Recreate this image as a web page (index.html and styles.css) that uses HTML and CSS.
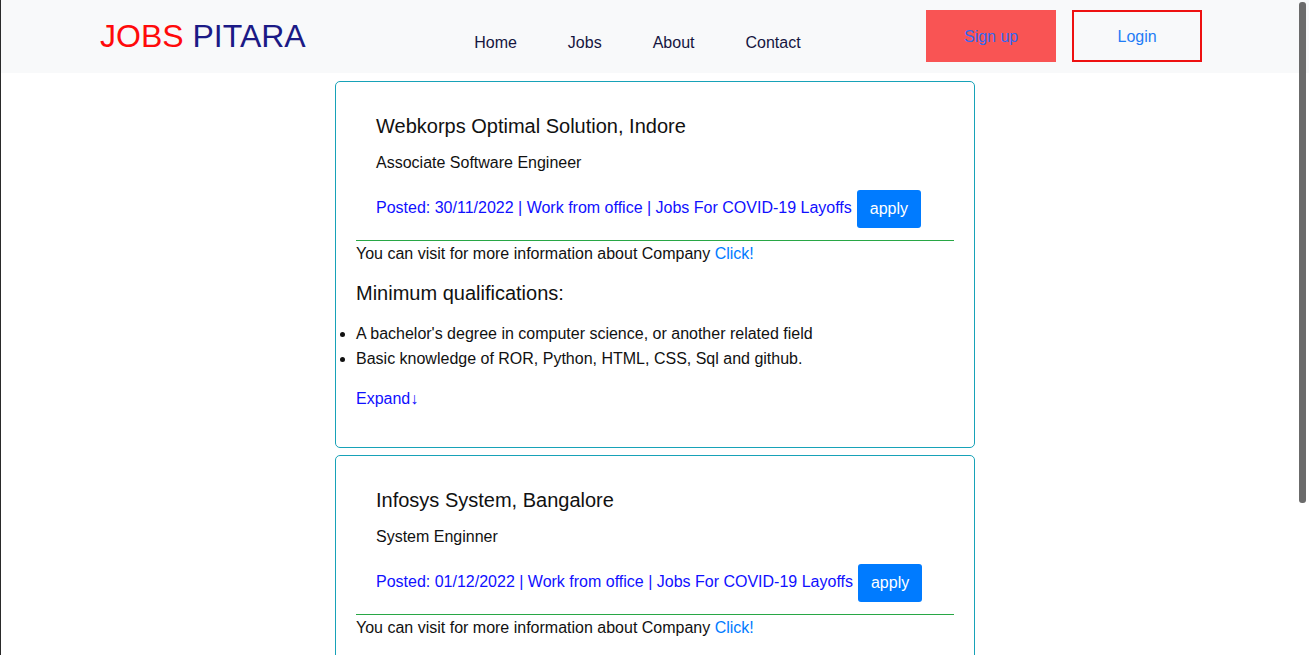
FILE: index.html
```html
<!DOCTYPE html>
<html lang="en">
<head>
<meta charset="utf-8">
<title>Jobs Pitara</title>
<link rel="stylesheet" href="styles.css">
</head>
<body>
<header class="topbar">
  <div class="logo"><span class="logo-red">JOBS</span> <span class="logo-blue">PITARA</span></div>
  <nav class="nav">
    <a class="nav-link" href="#">Home</a>
    <a class="nav-link" href="#">Jobs</a>
    <a class="nav-link" href="#">About</a>
    <a class="nav-link" href="#">Contact</a>
  </nav>
  <div class="auth">
    <a class="btn-signup" href="#">Sign up</a>
    <a class="btn-login" href="#">Login</a>
  </div>
</header>

<main class="jobs">
  <section class="card">
    <div class="card-head">
      <h5 class="company">Webkorps Optimal Solution, Indore</h5>
      <p class="role">Associate Software Engineer</p>
      <p class="meta">Posted: 30/11/2022 | Work from office | Jobs For COVID-19 Layoffs <a class="btn-apply" href="#">apply</a></p>
    </div>
    <hr class="divider">
    <p class="visit">You can visit for more information about Company <a class="click" href="#">Click!</a></p>
    <h5 class="qual">Minimum qualifications:</h5>
    <ul class="qual-list">
      <li>A bachelor's degree in computer science, or another related field</li>
      <li>Basic knowledge of ROR, Python, HTML, CSS, Sql and github.</li>
    </ul>
    <a class="expand" href="#">Expand↓</a>
  </section>

  <section class="card">
    <div class="card-head">
      <h5 class="company">Infosys System, Bangalore</h5>
      <p class="role">System Enginner</p>
      <p class="meta">Posted: 01/12/2022 | Work from office | Jobs For COVID-19 Layoffs <a class="btn-apply" href="#">apply</a></p>
    </div>
    <hr class="divider">
    <p class="visit">You can visit for more information about Company <a class="click" href="#">Click!</a></p>
    <h5 class="qual">Minimum qualifications:</h5>
    <ul class="qual-list">
      <li>A bachelor's degree in computer science, or another related field</li>
      <li>Basic knowledge of Java, Python, HTML, CSS, Sql and github.</li>
    </ul>
    <a class="expand" href="#">Expand↓</a>
  </section>
</main>
<div class="scroll-thumb"></div>
</body>
</html>
```

FILE: styles.css
```css
* { box-sizing: border-box; }

html, body {
  margin: 0;
  padding: 0;
}

body {
  font-family: "Liberation Sans", Arial, sans-serif;
  font-size: 16px;
  line-height: 24px;
  color: #111;
  background: #fff;
  border-left: 1px solid #2a2a2a;
}

a { text-decoration: none; }

.topbar {
  display: flex;
  align-items: flex-start;
  height: 73px;
  background: #f8f9fa;
  padding-left: 99px;
}

.logo {
  font-size: 32px;
  line-height: 38px;
  margin-top: 17px;
  white-space: nowrap;
}
.logo-red { color: #ff0a0a; }
.logo-blue { color: #1b1a86; }

.nav {
  display: flex;
  margin-top: 31px;
  margin-left: 143px;
}
.nav-link {
  color: #15153f;
  padding: 0 25.5px;
}

.auth {
  display: flex;
  gap: 16px;
  margin-top: 10px;
  margin-left: 100px;
}
.btn-signup,
.btn-login {
  display: flex;
  align-items: center;
  justify-content: center;
  width: 130px;
  height: 52px;
  padding-top: 2px;
}
.btn-signup {
  background: #f95454;
  color: #3468f0;
}
.btn-login {
  border: 2px solid #ee1111;
  color: #1f7cf6;
}

.jobs {
  width: 640px;
  margin: 8px auto 0;
}

.card {
  border: 1px solid #17a2b8;
  border-radius: 5px;
  padding: 20px;
  margin-bottom: 7px;
}

.card-head {
  padding: 12px 20px 13px;
}

.company {
  margin: 0 0 13px;
  font-size: 20px;
  font-weight: normal;
  line-height: 24px;
}

.role {
  margin: 0 0 14px;
}

.meta {
  margin: 0;
  color: #1010ff;
  line-height: 38px;
  height: 38px;
}

.btn-apply {
  display: inline-block;
  vertical-align: -1px;
  margin-left: 1px;
  background: #007bff;
  color: #fff;
  border-radius: 3px;
  padding: 7px 12.5px;
  line-height: 24px;
  font-size: 16px;
}

.divider {
  margin: 0;
  border: 0;
  border-top: 1px solid #28a745;
}

.visit {
  margin: 0;
  padding-top: 1px;
}
.click { color: #007bff; }

.qual {
  margin: 15px 0 0;
  font-size: 20px;
  font-weight: normal;
  line-height: 24px;
}

.qual-list {
  margin: 16px 0 0;
  padding: 0;
}
.qual-list li {
  line-height: 25px;
}

.expand {
  display: block;
  margin: 16px 0 16px;
  color: #1010ff;
  width: max-content;
}

.scroll-thumb {
  position: fixed;
  top: 2px;
  right: 3px;
  width: 7px;
  height: 501px;
  background: #6b6b6b;
  border-radius: 3px;
}
```
